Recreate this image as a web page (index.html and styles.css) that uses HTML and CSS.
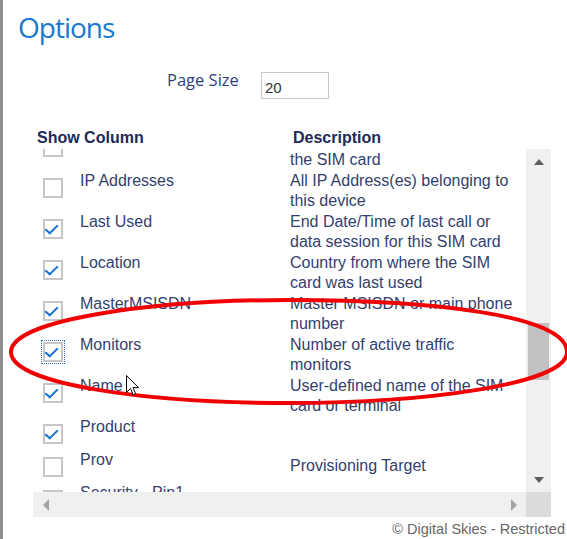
FILE: index.html
```html
<!DOCTYPE html>
<html>
<head>
<meta charset="utf-8">
<link rel="stylesheet" href="styles.css">
</head>
<body>
<div class="page">
  <h1 class="title">Options</h1>
  <div class="pagesize">
    <label class="ps-label" for="ps">Page Size</label>
    <input class="ps-input" id="ps" type="text" value="20">
  </div>
  <div class="grid-head">
    <span class="gh-col">Show Column</span>
    <span class="gh-desc">Description</span>
  </div>
  <div class="scrollbox">
    <div class="viewport">
      <div class="list">
        <div class="row"><span class="cb"></span><span class="lbl"></span><span class="desc cont">the SIM card</span></div>
        <div class="row"><span class="cb"></span><span class="lbl">IP Addresses</span><span class="desc">All IP Address(es) belonging to this device</span></div>
        <div class="row"><span class="cb checked"></span><span class="lbl">Last Used</span><span class="desc">End Date/Time of last call or data session for this SIM card</span></div>
        <div class="row"><span class="cb checked"></span><span class="lbl">Location</span><span class="desc">Country from where the SIM card was last used</span></div>
        <div class="row"><span class="cb checked"></span><span class="lbl">MasterMSISDN</span><span class="desc">Master MSISDN or main phone number</span></div>
        <div class="row"><span class="cb checked focus"></span><span class="lbl">Monitors</span><span class="desc">Number of active traffic monitors</span></div>
        <div class="row"><span class="cb checked"></span><span class="lbl">Name</span><span class="desc">User-defined name of the SIM card or terminal</span></div>
        <div class="row"><span class="cb checked"></span><span class="lbl">Product</span><span class="desc"></span></div>
        <div class="row"><span class="cb"></span><span class="lbl">Prov</span><span class="desc">Provisioning Target</span></div>
        <div class="row"><span class="cb"></span><span class="lbl">Security - Pin1</span><span class="desc"></span></div>
      </div>
    </div>
    <div class="vbar">
      <div class="sbtn"><span class="tri-up"></span></div>
      <div class="vtrack"><div class="vthumb" style="margin-top:149px"></div></div>
      <div class="sbtn"><span class="tri-down"></span></div>
    </div>
    <div class="hbar">
      <div class="hbtn"><span class="tri-left"></span></div>
      <div class="htrack"></div>
      <div class="hbtn"><span class="tri-right"></span></div>
    </div>
    <div class="corner"></div>
  </div>
  <div class="footer">© Digital Skies - Restricted</div>
</div>
<svg class="annot" width="567" height="539" viewBox="0 0 567 539">
  <path d="M 11 352 C 11 320, 150 300, 290 300 C 430 300, 567 315, 567 352 C 567 385, 420 403, 290 403 C 150 403, 11 385, 11 352 Z" fill="none" stroke="#f00000" stroke-width="4"/>
</svg>
<svg class="cursor" width="14" height="22" viewBox="0 0 14 22">
  <path d="M0.5 0.5 L0.5 17.5 L4.5 13.5 L7.2 19.8 L9.6 18.8 L7 12.6 L12.5 12.6 Z" fill="#ffffff" stroke="#000000" stroke-width="1" stroke-linejoin="miter"/>
</svg>
</body>
</html>
```
FILE: styles.css
```css
html, body {
  margin: 0;
  padding: 0;
  background: #ffffff;
}
body {
  position: relative;
  width: 567px;
  height: 539px;
  overflow: hidden;
}
.page {
  box-sizing: border-box;
  height: 539px;
  border-left: 3px solid #8e8e8e;
  padding: 9px 0 0 15px;
  font-family: "Liberation Sans", Arial, sans-serif;
  color: #333f6d;
}
.title {
  margin: 0;
  font-family: "Open Sans", sans-serif;
  font-weight: 400;
  font-size: 28px;
  line-height: 36px;
  color: #1a78cf;
  letter-spacing: -1px;
}
.pagesize {
  display: flex;
  align-items: flex-start;
  margin: 24px 0 0 149px;
}
.ps-label {
  font-family: "Open Sans", sans-serif;
  font-size: 16.5px;
  line-height: 22px;
  color: #2f3f7c;
  width: 94px;
}
.ps-input {
  box-sizing: border-box;
  margin: 3px 0 0 0;
  width: 68px;
  height: 27px;
  border: 1px solid #c6c6c6;
  padding: 4px 0 0 3px;
  font-family: "Liberation Sans", Arial, sans-serif;
  font-size: 15px;
  color: #333333;
  outline: none;
}
.grid-head {
  display: flex;
  margin: 29px 0 0 19px;
  font-weight: 700;
  font-size: 16px;
  line-height: 20px;
  color: #1d2a58;
}
.gh-col {
  width: 256px;
}
.scrollbox {
  display: grid;
  grid-template-columns: 493px 25px;
  grid-template-rows: 343px 25px;
  margin: 1px 0 0 15px;
  width: 518px;
}
.viewport {
  overflow: hidden;
  background: #ffffff;
}
.list {
  margin-top: -19px;
}
.row {
  display: grid;
  grid-template-columns: 37px 210px 226px;
  padding: 0 0 1px 10px;
  font-size: 16px;
  line-height: 20px;
  color: #333f6d;
}
.cb {
  box-sizing: border-box;
  position: relative;
  width: 20px;
  height: 20px;
  margin: 7px 0 5px 0;
  border: 2px solid #c6c6c6;
  background: #ffffff;
}
.cb.checked::after {
  content: "";
  position: absolute;
  left: 3px;
  top: 1px;
  width: 5px;
  height: 10px;
  border-right: 2.6px solid #1673d1;
  border-bottom: 2.6px solid #1673d1;
  transform: rotate(40deg) skewX(-6deg);
  transform-origin: center;
}
.cb.focus {
  outline: 1px dotted #2a6fc4;
  outline-offset: 1px;
}
.desc {
  align-self: center;
}
.desc.cont {
  align-self: start;
  padding-top: 20px;
}
.vbar {
  display: flex;
  flex-direction: column;
  background: #f0f0f0;
}
.sbtn {
  height: 25px;
  display: flex;
  align-items: center;
  justify-content: center;
  flex: none;
}
.vtrack {
  flex: 1;
  display: flex;
  flex-direction: column;
  align-items: center;
}
.vthumb {
  width: 21px;
  height: 57px;
  background: #c1c1c1;
}
.tri-up {
  width: 0;
  height: 0;
  border-left: 5.5px solid transparent;
  border-right: 5.5px solid transparent;
  border-bottom: 6px solid #5c5c5c;
}
.tri-down {
  width: 0;
  height: 0;
  border-left: 5.5px solid transparent;
  border-right: 5.5px solid transparent;
  border-top: 6px solid #5c5c5c;
}
.hbar {
  display: flex;
  background: #f0f0f0;
}
.hbtn {
  width: 25px;
  display: flex;
  align-items: center;
  justify-content: center;
}
.htrack {
  flex: 1;
}
.tri-left {
  width: 0;
  height: 0;
  border-top: 6px solid transparent;
  border-bottom: 6px solid transparent;
  border-right: 6px solid #a3a3a3;
}
.tri-right {
  width: 0;
  height: 0;
  border-top: 6px solid transparent;
  border-bottom: 6px solid transparent;
  border-left: 6px solid #a3a3a3;
}
.corner {
  background: #dcdcdc;
}
.footer {
  margin: 4px 0 0 0;
  padding-right: 2px;
  text-align: right;
  font-size: 14.5px;
  line-height: 17px;
  color: #666666;
}
.annot {
  position: absolute;
  left: 0;
  top: 0;
  pointer-events: none;
}
.cursor {
  position: absolute;
  left: 126px;
  top: 375px;
  pointer-events: none;
}
```
